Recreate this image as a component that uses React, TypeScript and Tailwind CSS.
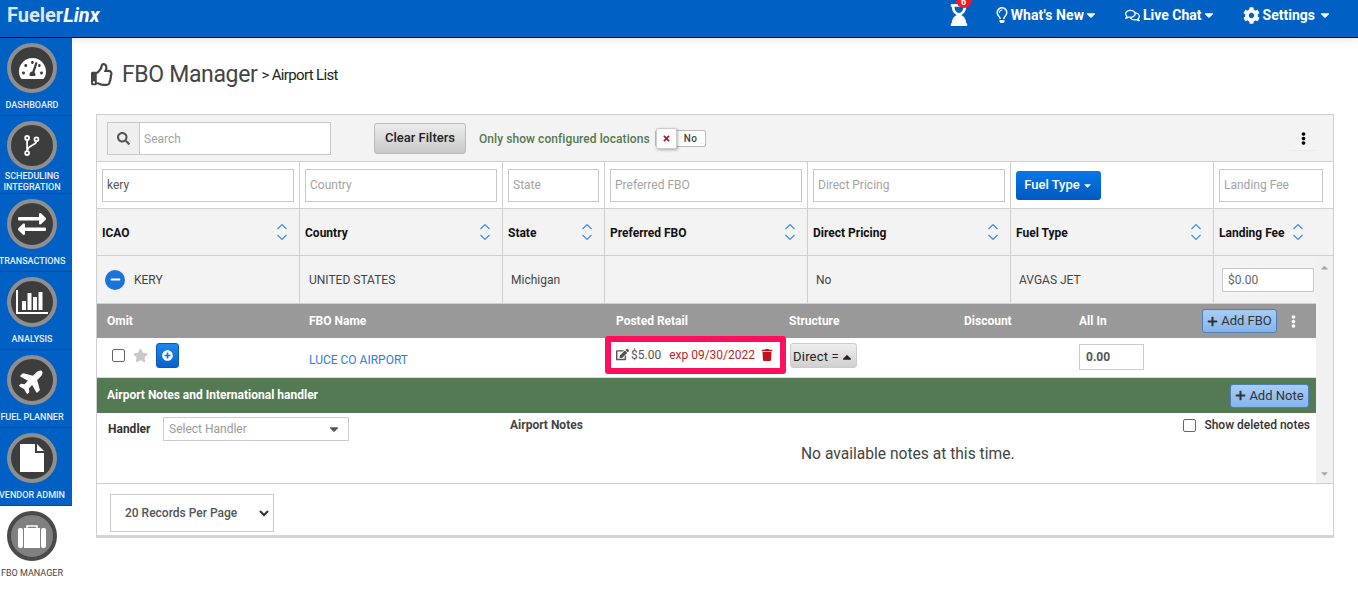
import React from "react";
import {
  FaRegThumbsUp, FaSearch, FaTimes, FaEllipsisV, FaPlus, FaStar, FaTrash, FaEdit, FaCaretDown, FaCaretUp,
  FaCog, FaRegLightbulb, FaRegComments, FaHourglassEnd, FaPlane, FaTachometerAlt, FaExchangeAlt, FaMinus, FaPlusCircle,
} from "react-icons/fa";

const Disc = ({ children, active }: { children: React.ReactNode; active?: boolean }) => (
  <div className={`flex h-[50px] w-[50px] items-center justify-center rounded-full border-[4px] ${active ? "border-[#4a4a4a] bg-[#808080]" : "border-[#8f8f8f] bg-[#3d3d3d]"}`}>
    {children}
  </div>
);

const Branch = () => (
  <svg width="16" height="23" viewBox="0 0 18 24" fill="none" stroke="white" strokeWidth="2">
    <circle cx="3.5" cy="3.5" r="2.2" /><circle cx="14" cy="5" r="2.2" /><circle cx="3.5" cy="20.5" r="2.2" />
    <path d="M3.5 6v12M14 7.5c0 4-10 4-10 10" />
  </svg>
);
const Chart = () => (
  <svg width="32" height="24" viewBox="0 0 32 24" fill="white">
    <rect x="0" y="0" width="2" height="24" /><rect x="0" y="22" width="32" height="2" />
    <rect x="6" y="11" width="4" height="9" /><rect x="11.500" y="3" width="4" height="17" /><rect x="17" y="7" width="4" height="13" /><rect x="22.500" y="2" width="4" height="18" />
  </svg>
);
const File = () => (
  <svg width="24" height="28" viewBox="0 0 24 28" fill="white">
    <path d="M0 0H15V9H24V28H0Z" /><path d="M17 0L24 7H17Z" />
  </svg>
);
const Case = () => (
  <svg width="28" height="23" viewBox="0 0 28 23" fill="white">
    <path d="M9 3V1h10V3" fill="none" stroke="white" strokeWidth="1.500" />
    <rect x="0" y="3" width="5" height="20" rx="2" /><rect x="6" y="3" width="16" height="20" /><rect x="23" y="3" width="5" height="20" rx="2" />
  </svg>
);

const navItems: { label: React.ReactNode; icon: React.ReactNode }[] = [
  { label: "DASHBOARD", icon: <FaTachometerAlt className="text-[27px] text-white" /> },
  { label: <>SCHEDULING<br />INTEGRATION</>, icon: <Branch /> },
  { label: "TRANSACTIONS", icon: <FaExchangeAlt className="text-[28px] text-white" /> },
  { label: "ANALYSIS", icon: <Chart /> },
  { label: "FUEL PLANNER", icon: <FaPlane className="-rotate-45 text-[27px] text-white" /> },
  { label: "VENDOR ADMIN", icon: <File /> },
];

const Sort = () => (
  <svg width="12" height="18" viewBox="0 0 12 18" fill="none" stroke="#3f8cf0" strokeWidth="1.200">
    <path d="M1.500 6L6 1.500L10.500 6M1.500 12L6 16.500L10.500 12" />
  </svg>
);

const Field = ({ ph, value, className = "" }: { ph?: string; value?: string; className?: string }) => (
  <div className={`flex h-[33px] items-center border border-[#c8c8c8] bg-white px-[4px] text-[12px] ${value ? "text-[#555]" : "text-[#a3a3a3]"} ${className}`}>
    {value ?? ph}
  </div>
);

const widths = ["w-[203px]", "w-[203px]", "w-[102px]", "w-[203px]", "w-[203px]", "w-[203px]", "w-[120px]"];
const heads = ["ICAO", "Country", "State", "Preferred FBO", "Direct Pricing", "Fuel Type", "Landing Fee"];
const filters = ["kery", "Country", "State", "Preferred FBO", "Direct Pricing", "", "Landing Fee"];
const cells = ["KERY", "UNITED STATES", "Michigan", "", "No", "AVGAS JET", ""];

export default function App() {
  return (
    <div className="flex min-h-[601px] flex-col bg-white text-[#333] [font-family:Roboto,'Liberation_Sans',sans-serif]">
      <header className="flex h-[38px] items-center justify-between border-b border-black bg-[#0060c4] pb-[7px] shadow-[0_2px_8px_rgba(0,0,0,0.1)]">
        <div className="pl-[7px] text-[20px] font-bold leading-none text-[#dfe6f0]">
          Fueler<span className="italic text-white">Linx</span>
        </div>
        <div className="flex items-center text-[14px] font-bold text-white">
          <div className="relative mr-[24px]">
            <FaHourglassEnd className="text-[22px]" />
            <span className="absolute -right-[2px] -top-[12px] flex h-[16px] w-[16px] items-center justify-center rounded-full bg-[#ee1c25] pt-[5px] text-[9px] leading-none">6</span>
          </div>
          <FaRegLightbulb className="mr-[1px] text-[16px]" />
          <span className="tracking-[0.1px]">What's New</span>
          <FaCaretDown className="mr-[27px] text-[14px]" />
          <FaRegComments className="mr-[3px] text-[15px]" />
          <span>Live Chat</span>
          <FaCaretDown className="mr-[27px] text-[14px]" />
          <FaCog className="mr-[3px] text-[17px]" />
          <span>Settings</span>
          <FaCaretDown className="ml-[3px] mr-[26px] text-[14px]" />
        </div>
      </header>

      <div className="flex flex-1">
        <nav className="w-[72px] shrink-0">
          <div className="bg-[#0060c4]">
            {navItems.map((n, i) => (
              <div key={i} className="flex h-[78px] flex-col items-center border-b border-[#0b4a8f] pr-[8px] pt-[5px] text-center text-[9px] font-medium leading-[11px] text-[#e8eefa]">
                <Disc>{n.icon}</Disc>
                <div className={`flex flex-1 items-center whitespace-nowrap ${i === 1 ? "pt-[1px]" : "pt-[3px]"}`}><span>{n.label}</span></div>
              </div>
            ))}
          </div>
          <div className="flex flex-col items-center pr-[8px] pt-[5px] text-[9px] leading-[11px] text-[#444]">
            <Disc active><Case /></Disc>
            <div className="mt-[7px] whitespace-nowrap">FBO MANAGER</div>
          </div>
        </nav>

        <main className="flex-1 pl-[24px] pr-[24px]">
          <div className="flex h-[76px] items-center pb-[4px] text-[#444]">
            <FaRegThumbsUp className="-ml-[5px] mr-[8px] text-[23px]" />
            <span className="text-[23px] leading-none tracking-[-0.35px]">FBO Manager</span>
            <span className="ml-[4px] mt-[3px] text-[15px] leading-none tracking-[-0.65px] text-[#222]">&gt; Airport List</span>
          </div>

          <div className="w-[1238px] border border-[#cfcfcf] border-b-[3px] border-b-[#d4d4d4]">
            {/* toolbar */}
            <div className="flex h-[47px] items-center border-b border-[#cfcfcf] bg-[#f3f3f3] pl-[10px] pr-[18px]">
              <div className="flex h-[33px] w-[224px] border border-[#c8c8c8] bg-white text-[12px] text-[#a3a3a3]">
                <div className="flex w-[32px] items-center justify-center border-r border-[#c8c8c8] bg-[#efefef]"><FaSearch className="text-[13px] text-[#555]" /></div>
                <div className="flex items-center pl-[4px] pt-[1px]">Search</div>
              </div>
              <div className="ml-[43px] flex h-[31px] w-[92px] items-center justify-center rounded-[3px] border border-[#bbb] bg-gradient-to-b from-[#ececec] to-[#c9c9c9] text-[13px] font-medium text-[#222]">Clear Filters</div>
              <span className="ml-[13px] pt-[1px] text-[12px] font-medium tracking-[0.07px] text-[#53794f]">Only show configured locations</span>
              <div className="ml-[5px] flex h-[17px] w-[51px] items-center rounded-[2px] border border-[#bbb] bg-white">
                <div className="-my-[2px] flex h-[21px] w-[21px] items-center justify-center rounded-[2px] border border-[#ccc] bg-white shadow-[1px_1px_3px_rgba(0,0,0,0.3)]"><FaTimes className="text-[9px] text-[#b0103c]" /></div>
                <span className="flex-1 text-center text-[10px] font-medium tracking-[0.4px] text-[#444]">No</span>
              </div>
              <div className="ml-auto flex h-[25px] w-[24px] items-start justify-center border-b border-[#eaeaea] pt-[6px]"><FaEllipsisV className="text-[13px] text-black" /></div>
            </div>

            {/* filters */}
            <div className="flex h-[47px] border-b border-[#cfcfcf] bg-white">
              {filters.map((f, i) => (
                <div key={i} className={`${widths[i]} flex shrink-0 items-center border-r border-[#cfcfcf] px-[5px] last:border-r-0`}>
                  {i === 5 ? (
                    <div className="flex h-[29px] w-[85px] items-center justify-center rounded-[3px] bg-gradient-to-b from-[#0a78ea] to-[#0059bf] text-[13px] font-medium text-white">Fuel Type<FaCaretDown className="ml-[2px] text-[11px]" /></div>
                  ) : (
                    <Field className={i === 6 ? "w-[104px]" : "w-full"} ph={f} value={i === 0 ? f : undefined} />
                  )}
                </div>
              ))}
            </div>

            {/* heads */}
            <div className="flex h-[47px] border-b border-[#cfcfcf] bg-[#f3f3f3]">
              {heads.map((h, i) => (
                <div key={i} className={`${widths[i]} flex shrink-0 items-center justify-between border-r border-[#cfcfcf] pl-[5px] text-[12px] font-bold text-[#111] last:border-r-0 ${i === 6 ? "pr-[30px]" : "pr-[11px]"}`}>
                  <span className="pt-[1px]">{h}</span><Sort />
                </div>
              ))}
            </div>

            {/* body */}
            <div className="flex">
              <div className="w-[1219px]">
                <div className="flex h-[48px] border-b border-[#cfcfcf] bg-[#f3f3f3]">
                  {cells.map((c, i) => (
                    <div key={i} className={`${i === 6 ? "w-[103px]" : widths[i]} flex shrink-0 items-center border-r border-[#cfcfcf] text-[12px] text-[#444] last:border-r-0 ${i === 1 ? "pl-[9px]" : "pl-[8px]"}`}>
                      {i === 0 && (
                        <span className="mr-[9px] flex h-[20px] w-[20px] items-center justify-center rounded-full bg-[#1a73d9]"><FaMinus className="text-[11px] text-white" /></span>
                      )}
                      {i === 6 ? (
                        <div className="flex h-[24px] w-[92px] items-center border border-[#c8c8c8] bg-white pl-[5px] text-[12px] text-[#666]">$0.00</div>
                      ) : c}
                    </div>
                  ))}
                </div>

                <div className="grid h-[34px] grid-cols-[202px_307px_173px_175px_115px_123px_1fr] items-center bg-[#999] pl-[10px] text-[12px] font-bold text-white">
                  <span>Omit</span><span>FBO Name</span><span>Posted Retail</span><span>Structure</span><span>Discount</span><span>All In</span>
                  <div className="flex items-center">
                    <div className="flex h-[24px] w-[75px] items-center justify-center rounded-[3px] border border-[#4d7eb8] bg-gradient-to-b from-[#a8cdf5] to-[#85b5ec] text-[13px] font-normal text-[#333]"><FaPlus className="mr-[3px] text-[11px]" />Add FBO</div>
                    <FaEllipsisV className="ml-[10px] text-[13px]" />
                  </div>
                </div>

                <div className="grid h-[40px] grid-cols-[202px_296px_184px_175px_115px_1fr] items-start border-b border-[#ddd] bg-white pl-[10px] text-[12px]">
                  <div className="flex items-center pl-[5px] pt-[5px]">
                    <span className="h-[13px] w-[13px] rounded-[2px] border border-[#666] bg-white" />
                    <FaStar className="ml-[8px] text-[15px] text-[#c9c9c9]" />
                    <span className="ml-[8px] flex h-[25px] w-[23px] items-center justify-center rounded-[3px] border border-[#0a58b0] bg-gradient-to-b from-[#1d86ee] to-[#0b62cb]"><FaPlusCircle className="text-[11px] text-white" /></span>
                  </div>
                  <div className="pt-[13px] text-[#2f7de1]">LUCE CO AIRPORT</div>
                  <div className="-mt-[2px] flex h-[38px] w-[181px] items-center rounded-[3px] border-[6px] border-[#ff0f5e] pl-[5px] pb-[1px] text-[12px]">
                    <FaEdit className="text-[13px] text-[#555]" />
                    <span className="ml-[2px] text-[#555]">$5.00</span>
                    <span className="ml-[8px] text-[#b8261f]">exp 09/30/2022</span>
                    <FaTrash className="ml-[6px] text-[12px] text-[#c1121f]" />
                  </div>
                  <div className="pl-[1px] pt-[5px]">
                    <div className="flex h-[25px] w-[67px] items-center justify-center rounded-[3px] border border-[#ccc] bg-gradient-to-b from-[#eee] to-[#d0d0d0] pt-[2px] text-[13px] tracking-[0.2px] text-[#222]">Direct =<FaCaretUp className="ml-[1px] text-[14px]" /></div>
                  </div>
                  <div />
                  <div className="pt-[6px]">
                    <div className="flex h-[26px] w-[65px] items-center border border-[#ccc] bg-white pl-[6px] text-[12px] font-bold text-[#555]">0.00</div>
                  </div>
                </div>

                <div className="flex h-[35px] items-center justify-between bg-[#537a53] pl-[10px] pr-[7px] text-[12px] font-bold text-white">
                  <span className="-mt-[2px]">Airport Notes and International handler</span>
                  <div className="flex h-[24px] w-[79px] items-center justify-center rounded-[3px] border border-[#4d7eb8] bg-gradient-to-b from-[#a8cdf5] to-[#85b5ec] text-[13px] font-normal text-[#333]"><FaPlus className="mr-[3px] text-[11px]" />Add Note</div>
                </div>

                <div className="h-[70px] bg-white pl-[11px] pr-[6px] pt-[4px]">
                  <div className="flex items-start text-[12px]">
                    <span className="mt-[3px] w-[55px] font-bold text-[#333]">Handler</span>
                    <div className="flex h-[24px] w-[186px] items-center justify-between border border-[#ccc] pl-[5px] pr-[7px] text-[12px] text-[#9a9a9a]">
                      Select Handler<FaCaretDown className="text-[14px] text-[#555]" />
                    </div>
                    <span className="ml-[161px] -mt-[1px] font-bold text-[#444]">Airport Notes</span>
                    <span className="ml-auto -mt-[1px] flex items-center font-medium text-[#333]">
                      <span className="mr-[8px] h-[13px] w-[13px] rounded-[2px] border border-[#666]" />Show deleted notes
                    </span>
                  </div>
                  <div className="mt-[2px] pl-[693px] text-[15.6px] text-[#444]">No available notes at this time.</div>
                </div>
              </div>
              <div className="flex w-[17px] flex-col items-center justify-between bg-[#f1f1f1] pb-[4px] pt-[6px] text-[#a8a8a8]">
                <FaCaretUp className="text-[11px]" />
                <FaCaretDown className="text-[11px]" />
              </div>
            </div>

            {/* footer */}
            <div className="flex h-[52px] items-center border-t border-[#cfcfcf] bg-white pl-[13px] pt-[7px]">
              <div className="flex h-[38px] w-[164px] items-center justify-between border border-[#ccc] pl-[14px] pr-[3px] text-[12px] font-medium text-[#555]">
                20 Records Per Page
                <svg width="12" height="12" viewBox="0 0 12 12" fill="none" stroke="#333" strokeWidth="2"><path d="M2 4l4 4 4-4" /></svg>
              </div>
            </div>
          </div>
        </main>
      </div>
    </div>
  );
}
